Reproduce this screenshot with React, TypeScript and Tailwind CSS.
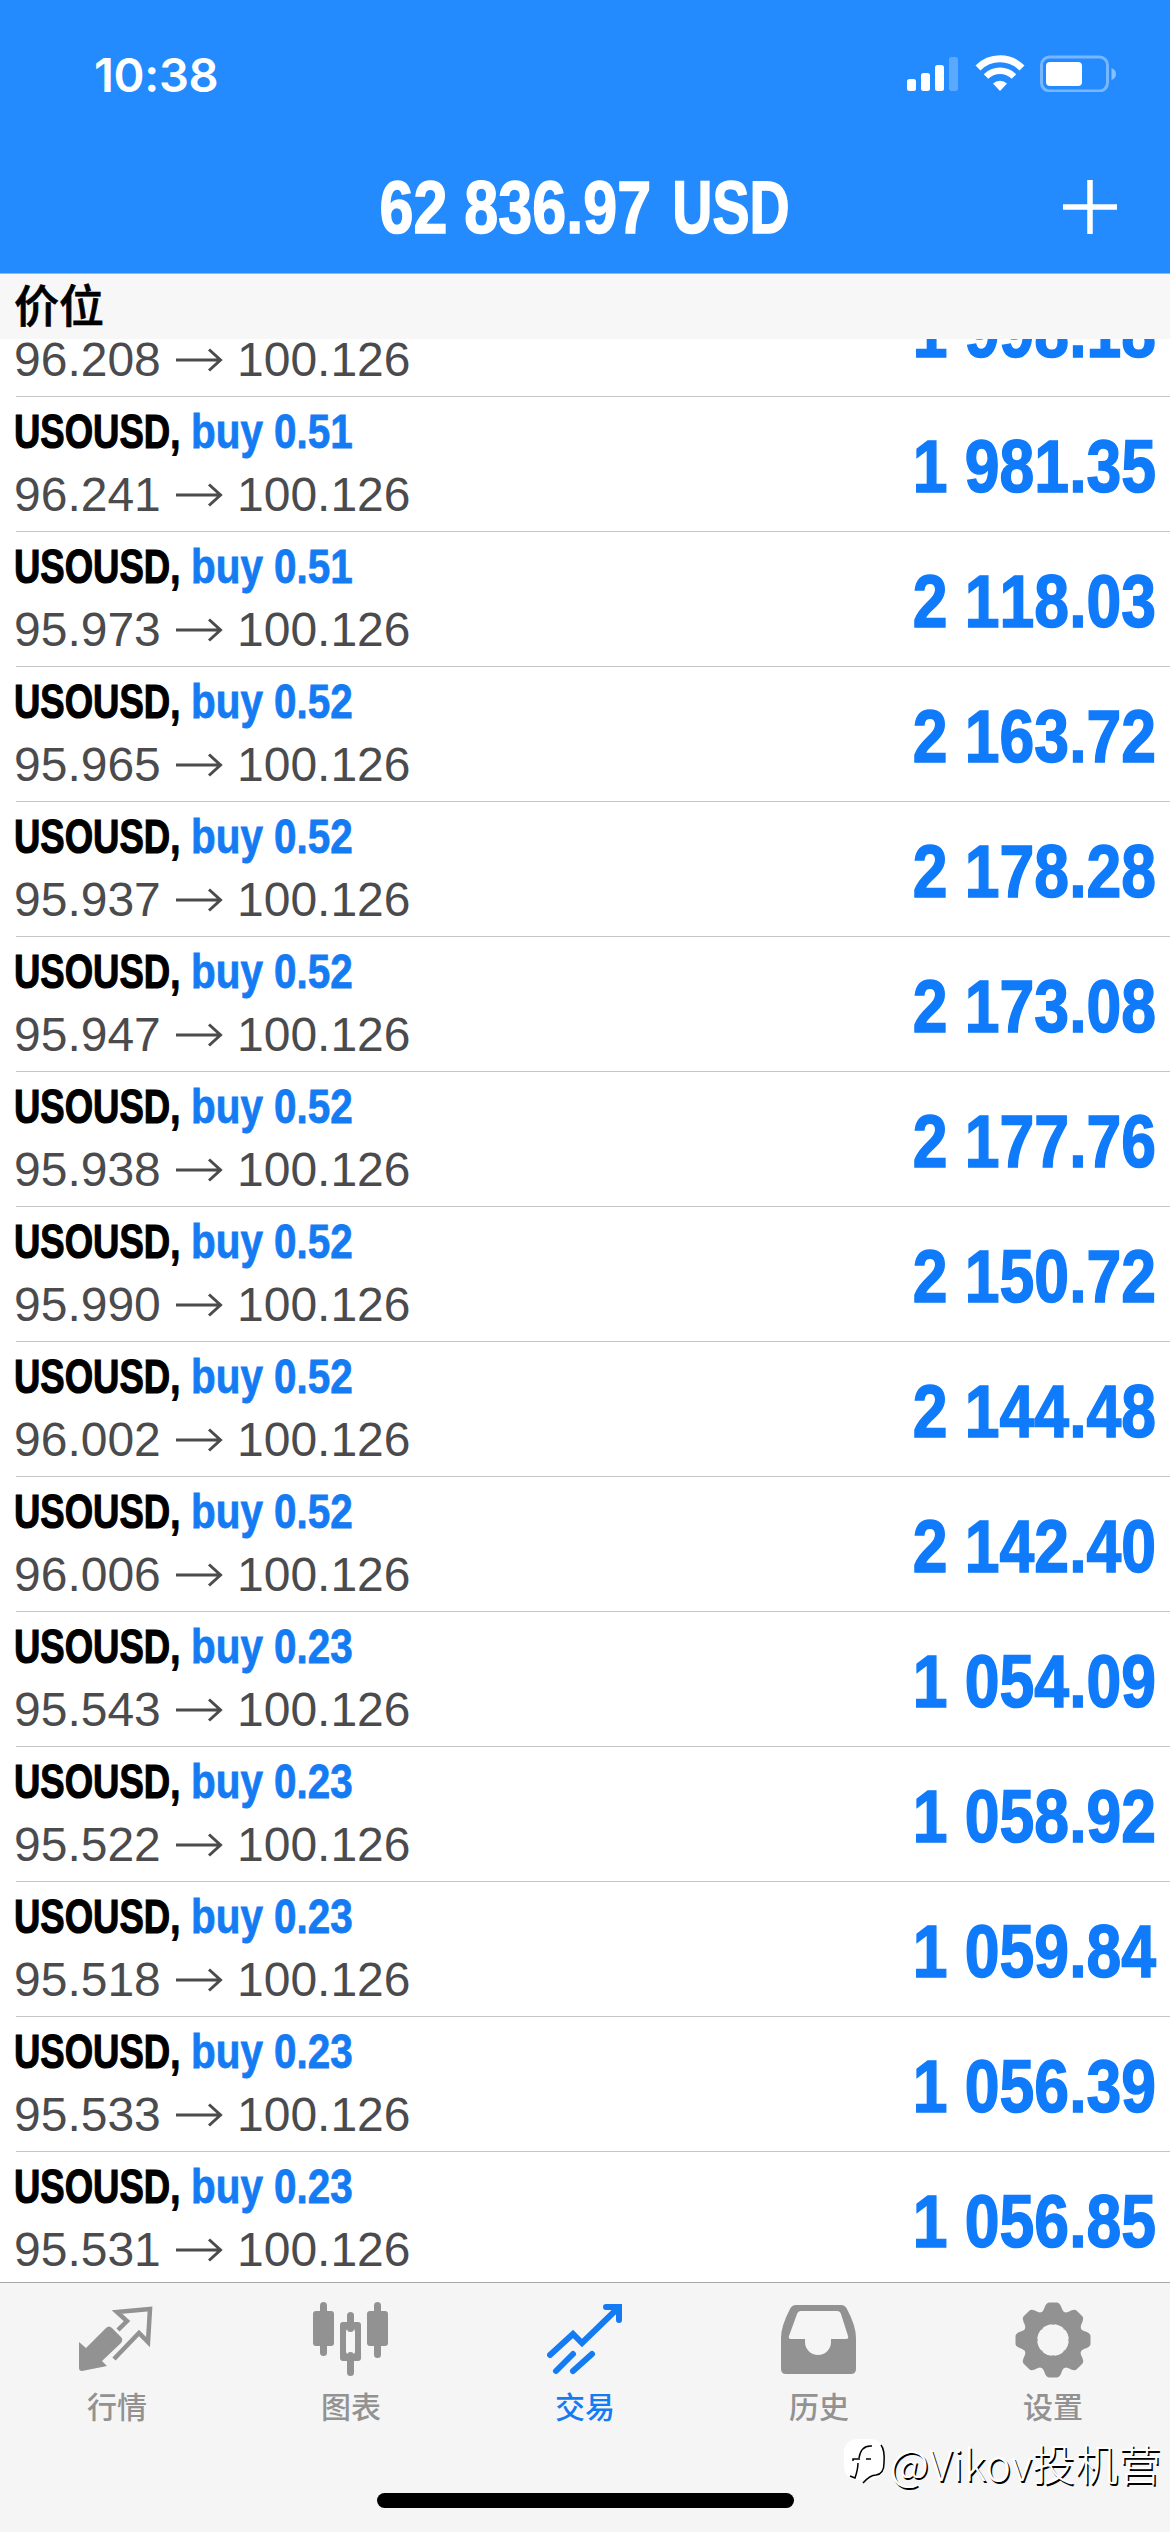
import type { ReactNode } from "react";

type Position = {
  symbol: string;
  side: string;
  volume: string;
  open: string;
  current: string;
  profit: string;
};

const positions: Position[] = [
  { symbol: "USOUSD", side: "buy", volume: "0.51", open: "96.208", current: "100.126", profit: "1 998.18" },
  { symbol: "USOUSD", side: "buy", volume: "0.51", open: "96.241", current: "100.126", profit: "1 981.35" },
  { symbol: "USOUSD", side: "buy", volume: "0.51", open: "95.973", current: "100.126", profit: "2 118.03" },
  { symbol: "USOUSD", side: "buy", volume: "0.52", open: "95.965", current: "100.126", profit: "2 163.72" },
  { symbol: "USOUSD", side: "buy", volume: "0.52", open: "95.937", current: "100.126", profit: "2 178.28" },
  { symbol: "USOUSD", side: "buy", volume: "0.52", open: "95.947", current: "100.126", profit: "2 173.08" },
  { symbol: "USOUSD", side: "buy", volume: "0.52", open: "95.938", current: "100.126", profit: "2 177.76" },
  { symbol: "USOUSD", side: "buy", volume: "0.52", open: "95.990", current: "100.126", profit: "2 150.72" },
  { symbol: "USOUSD", side: "buy", volume: "0.52", open: "96.002", current: "100.126", profit: "2 144.48" },
  { symbol: "USOUSD", side: "buy", volume: "0.52", open: "96.006", current: "100.126", profit: "2 142.40" },
  { symbol: "USOUSD", side: "buy", volume: "0.23", open: "95.543", current: "100.126", profit: "1 054.09" },
  { symbol: "USOUSD", side: "buy", volume: "0.23", open: "95.522", current: "100.126", profit: "1 058.92" },
  { symbol: "USOUSD", side: "buy", volume: "0.23", open: "95.518", current: "100.126", profit: "1 059.84" },
  { symbol: "USOUSD", side: "buy", volume: "0.23", open: "95.533", current: "100.126", profit: "1 056.39" },
  { symbol: "USOUSD", side: "buy", volume: "0.23", open: "95.531", current: "100.126", profit: "1 056.85" },
];

function StatusBar() {
  return (
    <div className="flex h-[146px] items-start justify-between pt-[50px] pr-[53px] pl-[94px]">
      <span className="font-['Inter'] text-[47px] leading-[49px] font-semibold tracking-[-0.3px]">
        10:38
      </span>
      <div className="flex items-start pt-[5px]">
        <svg width="52" height="36" viewBox="0 0 52 36" fill="currentColor">
          <rect x="0" y="24" width="9" height="12" rx="2.5" />
          <rect x="14" y="18" width="9" height="18" rx="2.5" />
          <rect x="28" y="10" width="9" height="26" rx="2.5" />
          <rect x="42" y="2" width="9" height="34" rx="2.5" opacity="0.25" />
        </svg>
        <svg className="ml-[16px]" width="50" height="36" viewBox="0 0 50 36" fill="none" stroke="currentColor">
          <path d="M3 13 A31 31 0 0 1 47 13" strokeWidth="7" />
          <path d="M11 21.500 A20 20 0 0 1 39 21.500" strokeWidth="6.500" />
          <path d="M25 36 L18 28.500 A10 10 0 0 1 32 28.500 Z" fill="currentColor" stroke="none" />
        </svg>
        <svg className="ml-[15px]" width="77" height="37" viewBox="0 0 77 37">
          <rect x="1.5" y="2" width="66" height="34" rx="8" fill="none" stroke="#fff" strokeWidth="3" opacity="0.38" />
          <rect x="6" y="7" width="36" height="24" rx="4" fill="#fff" />
          <path d="M71.500 13 Q76 15 76 19 Q76 23 71.500 25 Z" fill="#fff" opacity="0.45" />
        </svg>
      </div>
    </div>
  );
}

function PositionRow({ position }: { position: Position }) {
  return (
    <li className="ml-4 flex h-[135px] shrink-0 items-start justify-between border-b border-[#c6c6c8] pr-4">
      <div className="-ml-[2px]">
        <div className="flex h-[68px] pt-[6px] text-[49px] leading-[56px] font-bold whitespace-nowrap">
          <span className="w-[177px] origin-left scale-x-[0.745] text-black [-webkit-text-stroke:1.2px_#000]">
            {position.symbol},
          </span>
          <span className="origin-left scale-x-[0.825] text-[#147bf3] [-webkit-text-stroke:0.8px_#147bf3]">
            {position.side} {position.volume}
          </span>
        </div>
        <div className="flex items-center text-[48px] leading-[60px] text-[#4b4b4d]">
          <span className="w-[146px]">{position.open}</span>
          <svg className="mr-[14px] ml-4" width="47" height="24" viewBox="0 0 47 24" fill="none" stroke="currentColor" strokeWidth="3">
            <path d="M0 12 H44 M33 1.500 L44.500 12 L33 22.500" />
          </svg>
          <span>{position.current}</span>
        </div>
      </div>
      <div className="mr-[-2px] origin-right scale-x-[0.845] pt-[28px] text-[74px] leading-[84px] font-bold whitespace-nowrap text-[#0f7bfa] [font-kerning:none] [-webkit-text-stroke:1.5px_#0f7bfa]">
        {position.profit}
      </div>
    </li>
  );
}

function QuotesIcon() {
  return (
    <svg width="76" height="76" viewBox="0 0 76 76" fill="currentColor">
      <path d="M0 40 L7 46 L27 26 Q30 23 33 26 L42 35 Q44.500 38 42 41 L23 59 L28 64 L3 69 Q0 69 0 66 Z" />
      <path
        d="M39 28 L48 19 L38 10 L71 7 L69 40 L60 31 L35 57"
        fill="none"
        stroke="currentColor"
        strokeWidth="4.500"
      />
    </svg>
  );
}

function ChartIcon() {
  return (
    <svg width="76" height="76" viewBox="0 0 76 76" fill="currentColor">
      <rect x="7" y="0" width="7" height="54" rx="3.500" />
      <rect x="0" y="9" width="21" height="35" rx="3" />
      <rect x="34" y="10" width="7" height="20" rx="3.500" />
      <rect x="34" y="50" width="7" height="24" rx="3.500" />
      <path fillRule="evenodd" d="M30 20 H45 Q48 20 48 23 V56 Q48 59 45 59 H30 Q27 59 27 56 V23 Q27 20 30 20 Z M37.500 26 Q33 26 33 30 V49 Q33 53 37.500 53 Q42 53 42 49 V30 Q42 26 37.500 26 Z" />
      <rect x="61" y="0" width="7" height="56" rx="3.500" />
      <rect x="54" y="9" width="21" height="35" rx="3" />
    </svg>
  );
}

function TradeIcon() {
  return (
    <svg width="76" height="76" viewBox="0 0 76 76" fill="none" stroke="currentColor" strokeWidth="6" strokeLinecap="round">
      <path d="M3 53 L26 32 L35 41 L70 7" />
      <path d="M59 5 H72 V18" />
      <path d="M9 69 L26 52 M26 69 L45 52" />
    </svg>
  );
}

function HistoryIcon() {
  return (
    <svg width="76" height="76" viewBox="0 0 76 76" fill="currentColor">
      <path
        fillRule="evenodd"
        d="M15 3 H60 Q64 3 66 7 Q75 24 75 36 V67 Q75 72 70 72 H5 Q0 72 0 67 V36 Q0 24 9 7 Q11 3 15 3 Z M20 9 Q17 9 16 12 L8 34 Q7 37 10 37 H24 V40 A12.500 12.500 0 0 0 50 40 V37 H65 Q68 37 67 34 L60 12 Q59 9 56 9 Z"
      />
    </svg>
  );
}

function SettingsIcon() {
  return (
    <svg width="76" height="76" viewBox="-38 -38 76 76" fill="currentColor">
      {[0, 45, 90, 135, 180, 225, 270, 315].map((angle) => (
        <path
          key={angle}
          transform={`rotate(${angle})`}
          d="M-13 -27 Q-10 -28 -9 -31 Q-7 -37.500 -4 -37.500 H4 Q7 -37.500 9 -31 Q10 -28 13 -27 L0 -15 Z"
        />
      ))}
      <circle r="22.500" fill="none" stroke="currentColor" strokeWidth="13.500" />
    </svg>
  );
}

function Tab({ label, active, children }: { label: string; active?: boolean; children: ReactNode }) {
  return (
    <div className={active ? "flex flex-1 flex-col items-center text-[#147bf3]" : "flex flex-1 flex-col items-center text-[#929292]"}>
      {children}
      <span className="mt-[5px] font-['Noto_Sans_CJK_SC',sans-serif] text-[30px] leading-[44px] font-medium">{label}</span>
    </div>
  );
}

export default function App() {
  return (
    <div className="relative flex h-[2532px] w-[1170px] flex-col overflow-hidden bg-white font-['Liberation_Sans',sans-serif]">
      <header className="h-[273px] shrink-0 bg-[#248bff] text-white">
        <StatusBar />
        <div className="grid h-[124px] grid-cols-[1fr_auto_1fr] items-center">
          <h1 className="col-start-2 scale-x-[0.825] text-[74px] leading-[124px] font-bold whitespace-nowrap [-webkit-text-stroke:1.5px_#fff]">
            62 836.97{" "}
            <span className="-mr-[14px] ml-[5px] inline-block origin-left scale-x-[0.91]">USD</span>
          </h1>
          <svg className="mr-[52px] -mt-[2px] justify-self-end" width="56" height="56" viewBox="0 0 56 56" stroke="currentColor" strokeWidth="5.500">
            <path d="M28 1 V55 M1 28 H55" />
          </svg>
        </div>
      </header>

      <div className="h-[66px] shrink-0 border-t border-[#a8b4c4] bg-[#f7f7f7] pl-[14px] font-['Noto_Sans_CJK_SC',sans-serif] text-[45px] leading-[60px] font-medium text-black [-webkit-text-stroke:0.7px_#000]">
        价位
      </div>

      <main className="flex-1 overflow-hidden">
        <ul className="-mt-[77px] flex flex-col">
          {positions.map((position) => (
            <PositionRow key={position.open} position={position} />
          ))}
        </ul>
      </main>

      <nav className="flex h-[250px] shrink-0 border-t border-[#a9a9a9] bg-[#f5f5f5] pt-[19px]">
        <Tab label="行情"><QuotesIcon /></Tab>
        <Tab label="图表"><ChartIcon /></Tab>
        <Tab label="交易" active><TradeIcon /></Tab>
        <Tab label="历史"><HistoryIcon /></Tab>
        <Tab label="设置"><SettingsIcon /></Tab>
      </nav>

      <div className="absolute bottom-6 left-[377px] h-[15px] w-[417px] rounded-full bg-black" />

      <div className="absolute right-[9px] bottom-[42px] flex items-center">
        <svg className="mr-[3px]" width="44" height="50" viewBox="0 0 44 50" fill="none">
          <rect x="1" y="2" width="40" height="41" rx="13" fill="#fff" />
          <path d="M38 8 Q42 13 41 26 Q41 37 33 38 Q27 38 20 46" stroke="#000" strokeWidth="1.500" />
          <path d="M29 9 Q18 8 16 21 M15 26 Q15 32 12 41 L7 39 M10 24 V22 H17 M23 22 H28" stroke="#000" strokeWidth="1.500" />
        </svg>
        <span className="font-['Noto_Sans_CJK_SC',sans-serif] text-[43px] leading-[56px] font-light text-white [text-shadow:1.5px_1.5px_0_#000]">
          @Vikov投机营
        </span>
      </div>
    </div>
  );
}
